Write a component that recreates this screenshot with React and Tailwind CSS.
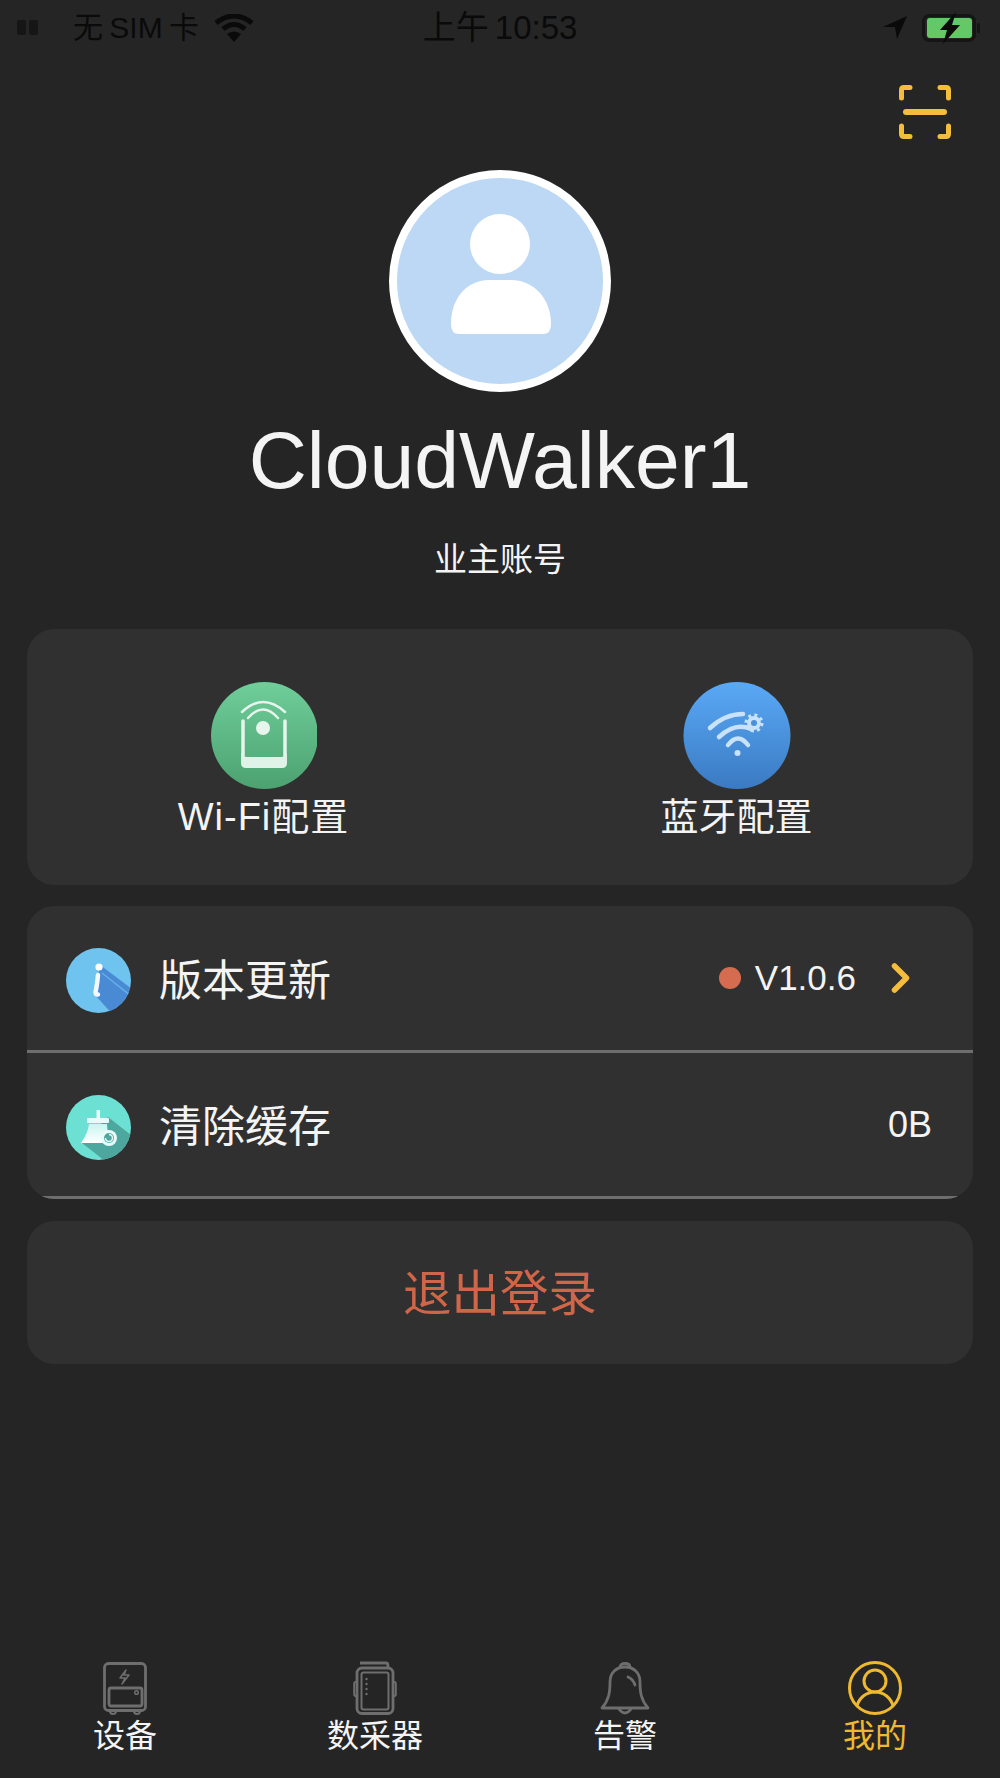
// App.jsx - profile page of the solar monitoring app
const FONT = "font-['Liberation_Sans','Noto_Sans_CJK_SC',sans-serif]";

const StatusBar = () => (
  <div className="flex h-[54px] items-center pt-[1px] text-[30px] leading-[40px] text-[#0a0a0a]">
    <div className="flex flex-1 items-center">
      <svg width="22" height="16" viewBox="0 0 22 16" className="ml-[17px]">
        <rect x="0" y="0" width="9" height="15" rx="2" fill="#161616" />
        <rect x="12" y="0" width="9" height="15" rx="2" fill="#161616" />
      </svg>
      <span className="ml-[34px] [word-spacing:-2px]">无 SIM 卡</span>
      <svg width="40" height="28" viewBox="0 0 40 28" className="ml-[15px]" fill="none" stroke="#0a0a0a" strokeWidth="5">
        <path d="M2 9 Q20 -5 38 9" />
        <path d="M9 15 Q20 6 31 15" />
        <path d="M20 28 L13 20 Q20 15 27 20 Z" fill="#0a0a0a" stroke="none" />
      </svg>
    </div>
    <span className="text-[33px] [word-spacing:-3px]">上午 10:53</span>
    <div className="flex flex-1 items-center justify-end">
      <svg width="24" height="23" viewBox="0 0 24 23">
        <path d="M24 0 L14 23 L12 11 L0 11 Z" fill="#0a0a0a" />
      </svg>
      <svg width="58" height="32" viewBox="0 0 58 32" className="ml-[15px] mr-[20px]">
        <rect x="1.5" y="3.5" width="51" height="25" rx="6" fill="none" stroke="#151515" strokeWidth="3" />
        <rect x="5" y="6" width="45" height="20" rx="3" fill="#64c866" />
        <rect x="55" y="11" width="3" height="10" rx="1.5" fill="#151515" />
        <path d="M34 0 L18 18 H25 L21 32 L38 13 H30 Z" fill="#0a0a0a" />
      </svg>
    </div>
  </div>
);

const ScanIcon = () => (
  <svg width="52" height="54" viewBox="0 0 52 54" fill="none" stroke="#f5bd3c" strokeWidth="5" strokeLinecap="round">
    <path d="M2.5 13 V5 Q2.5 2.5 5 2.5 H11" />
    <path d="M49.5 13 V5 Q49.5 2.5 47 2.5 H41" />
    <path d="M2.5 41 V49 Q2.5 51.5 5 51.5 H11" />
    <path d="M49.5 41 V49 Q49.5 51.5 47 51.5 H41" />
    <path d="M7 27 H45" strokeWidth="6" />
  </svg>
);

const Avatar = () => (
  <svg width="222" height="222" viewBox="0 0 222 222">
    <circle cx="111" cy="111" r="107" fill="#bcd8f5" stroke="#ffffff" strokeWidth="8" />
    <circle cx="111" cy="74" r="30" fill="#ffffff" />
    <path d="M62 154 C62 126 80 110 100 110 H122 C144 110 162 128 162 154 Q162 164 154 164 H70 Q62 164 62 154 Z" fill="#fff" />
  </svg>
);

const WifiConfigIcon = () => (
  <svg width="106" height="107" viewBox="0 0 106 107">
    <defs>
      <linearGradient id="greenBg" x1="0" y1="0" x2="0" y2="1">
        <stop offset="0" stopColor="#6fce9a" />
        <stop offset="1" stopColor="#4ca270" />
      </linearGradient>
    </defs>
    <circle cx="53.5" cy="53.5" r="53.5" fill="url(#greenBg)" />
    <g fill="none" stroke="#e6f6ed" strokeWidth="2.5" strokeLinecap="round">
      <path d="M31 30 Q52 10 74 30" />
      <path d="M37 36 Q52 19 67 36" />
      <path d="M32 39 V78 H74 V39" strokeWidth="3.5" />
    </g>
    <circle cx="52" cy="46" r="7" fill="#e6f6ed" />
    <path d="M30 71 Q32 75 36 75 H70 Q74 75 76 71 V81 Q76 86 71 86 H35 Q30 86 30 81 Z" fill="#e0f3e9" />
  </svg>
);

const BluetoothConfigIcon = () => (
  <svg width="108" height="107" viewBox="0 0 108 107">
    <defs>
      <linearGradient id="blueBg" x1="0" y1="0" x2="0" y2="1">
        <stop offset="0" stopColor="#5aa9f6" />
        <stop offset="1" stopColor="#3a7ac2" />
      </linearGradient>
    </defs>
    <circle cx="54" cy="53.5" r="53.5" fill="url(#blueBg)" />
    <g fill="none" stroke="#c8e2fb" strokeWidth="4.5" strokeLinecap="round">
      <path d="M27 46 Q42 32 60 32" />
      <path d="M36 55 Q52 40 68 47" />
      <path d="M45 63 Q55 50 65 63" />
    </g>
    <circle cx="54.5" cy="71" r="3" fill="#c8e2fb" />
    <circle cx="71" cy="41" r="7" fill="#c8e2fb" />
    <circle cx="71" cy="41" r="8" fill="none" stroke="#c8e2fb" strokeWidth="3" strokeDasharray="3 3.3" />
    <circle cx="71" cy="41" r="3" fill="#4a8fdb" />
  </svg>
);

const InfoIcon = () => (
  <svg width="65" height="65" viewBox="0 0 65 65">
    <defs>
      <clipPath id="infoClip"><circle cx="32.5" cy="32.5" r="32.5" /></clipPath>
    </defs>
    <g clipPath="url(#infoClip)">
      <rect width="65" height="65" fill="#6ec3ef" />
      <path d="M34 17 L70 44 V70 H50 L29 47 Z" fill="#4a89d3" />
      <path d="M36 25 L70 52" stroke="#6ec3ef" strokeWidth="1.5" opacity="0.7" />
    </g>
    <circle cx="33" cy="19" r="3.6" fill="#fff" />
    <path d="M32 27 Q31 38 29.5 44 Q29.5 47 32 46.5" fill="none" stroke="#f3f8fd" strokeWidth="4.5" strokeLinecap="round" />
  </svg>
);

const BroomIcon = () => (
  <svg width="65" height="65" viewBox="0 0 65 65">
    <defs>
      <clipPath id="broomClip"><circle cx="32.5" cy="32.5" r="32.5" /></clipPath>
      <linearGradient id="broomFill" x1="0" y1="0" x2="0" y2="1">
        <stop offset="0" stopColor="#c8f5ef" />
        <stop offset="1" stopColor="#ffffff" />
      </linearGradient>
    </defs>
    <g clipPath="url(#broomClip)">
      <rect width="65" height="65" fill="#6de0d4" />
      <path d="M42 22 L70 44 V70 H44 L16 48 Z" fill="#4ea79f" />
    </g>
    <rect x="30.5" y="15" width="3.5" height="9" fill="#f2fcfa" />
    <rect x="21" y="23" width="22" height="5" rx="1" fill="#e8fbf8" />
    <path d="M23 29 H41 Q41 38 44 48 H15 Q22 38 23 29 Z" fill="url(#broomFill)" />
    <circle cx="43" cy="43" r="8" fill="#e8fbf8" />
    <circle cx="43" cy="43" r="5" fill="#4ea79f" />
    <path d="M39.5 43 A3.5 3.5 0 1 0 43 39.5" fill="none" stroke="#e8fbf8" strokeWidth="1.5" />
  </svg>
);

const DeviceIcon = () => (
  <svg width="44" height="53" viewBox="0 0 44 53" fill="none" stroke="#6e6e6e" strokeWidth="2.8">
    <rect x="1.5" y="1.5" width="41" height="47" rx="4" />
    <rect x="6" y="26" width="33" height="18" rx="2" />
    <circle cx="33.5" cy="30.5" r="1.8" strokeWidth="1.5" />
    <path d="M23 8 L17 16 H22 L19 22 L26 13 H21 Z" strokeWidth="1.5" strokeLinejoin="round" />
    <path d="M7 49 Q7 52 10 52 Q13 52 13 49 M31 49 Q31 52 34 52 Q37 52 37 49" strokeWidth="2" />
  </svg>
);

const LoggerIcon = () => (
  <svg width="44" height="54" viewBox="0 0 44 54" fill="none" stroke="#6e6e6e" strokeWidth="2.8">
    <path d="M7 2 H33 Q35 2 35 5 V7" />
    <rect x="4" y="7" width="36" height="45.5" rx="5" />
    <rect x="8.5" y="11.5" width="27" height="37" rx="2" strokeWidth="2" />
    <path d="M4 21 H2.5 Q1.2 21 1.2 23 V33 Q1.2 35 2.5 35 H4 M40 21 H41.5 Q42.8 21 42.8 23 V33 Q42.8 35 41.5 35 H40" strokeWidth="2" />
    <g fill="#6e6e6e" stroke="none">
      <circle cx="13.5" cy="18" r="1.2" />
      <circle cx="13.5" cy="23" r="1.2" />
      <circle cx="13.5" cy="28" r="1.2" />
      <circle cx="13.5" cy="33" r="1.2" />
    </g>
  </svg>
);

const BellIcon = () => (
  <svg width="50" height="53" viewBox="0 0 50 53" fill="none" stroke="#6e6e6e" strokeWidth="2.8" strokeLinejoin="round" strokeLinecap="round">
    <path d="M2 46 C9 38 10 30 10 20 C10 10 17 5 25 5 C33 5 40 10 40 20 C40 30 41 38 48 46 Z" />
    <path d="M20 5.5 Q20 1.5 25 1.5 Q30 1.5 30 5.5" />
    <path d="M19 47 Q25 55 31 47" />
    <path d="M28 15 Q33 17 35 23" />
  </svg>
);

const MineIcon = () => (
  <svg width="54" height="54" viewBox="0 0 54 54" fill="none" stroke="#eeb92f" strokeWidth="3">
    <circle cx="27" cy="27" r="25.5" />
    <circle cx="27" cy="20" r="11" />
    <path d="M9 45 C11 37 18 31 27 31 C36 31 43 37 45 45" />
  </svg>
);

const tabs = [
  { label: '设备', icon: <DeviceIcon /> },
  { label: '数采器', icon: <LoggerIcon /> },
  { label: '告警', icon: <BellIcon /> },
  { label: '我的', icon: <MineIcon />, active: true },
];

export default function App() {
  return (
    <div className={`${FONT} flex h-[1778px] w-[1000px] flex-col bg-[#252525] text-[#f4f4f4]`}>
      <StatusBar />

      <div className="flex justify-end pr-[49px] pt-[31px]">
        <ScanIcon />
      </div>

      <div className="flex flex-col items-center">
        <div className="mt-[31px]">
          <Avatar />
        </div>
        <div className="mt-[22px] text-[80.5px] leading-[92px]">CloudWalker1</div>
        <div className="mt-[32px] text-[33px] leading-[44px]">业主账号</div>
      </div>

      <div className="mx-[27px] mt-[47px] flex h-[256px] rounded-[27px] bg-[#303030] pt-[53px]">
        <div className="flex w-[473px] flex-col items-center">
          <WifiConfigIcon />
          <span className="mt-[3px] text-[38px] leading-[50px] tracking-[1px]">Wi-Fi配置</span>
        </div>
        <div className="flex w-[473px] flex-col items-center">
          <BluetoothConfigIcon />
          <span className="mt-[3px] text-[38px] leading-[50px]">蓝牙配置</span>
        </div>
      </div>

      <div className="mx-[27px] mt-[21px] overflow-hidden rounded-[27px] bg-[#303030]">
        <div className="flex h-[147px] items-center border-b-[3px] border-[#6e6e6e] pl-[39px] pr-[62px]">
          <div className="mt-[5px] flex items-center">
            <InfoIcon />
            <span className="ml-[28px] text-[43px] leading-[56px]">版本更新</span>
          </div>
          <span className="ml-auto h-[22px] w-[22px] rounded-full bg-[#d56c50]" />
          <span className="ml-[14px] text-[35px] leading-[44px]">V1.0.6</span>
          <svg width="20" height="30" viewBox="0 0 20 30" className="ml-[35px]" fill="none" stroke="#f5bd3c" strokeWidth="5.5" strokeLinecap="round" strokeLinejoin="round">
            <path d="M3.5 3 L15.5 15 L3.5 27" />
          </svg>
        </div>
        <div className="flex h-[146px] items-center border-b-[3px] border-[#6e6e6e] pl-[39px] pr-[41px]">
          <div className="mt-[5px] flex items-center">
            <BroomIcon />
            <span className="ml-[28px] text-[43px] leading-[56px]">清除缓存</span>
          </div>
          <span className="ml-auto text-[36px] leading-[44px]">0B</span>
        </div>
      </div>

      <div className="mx-[27px] mt-[22px] flex h-[143px] items-center justify-center rounded-[27px] bg-[#303030] pt-[4px] text-[48.5px] text-[#cf6549]">
        退出登录
      </div>

      <div className="mt-auto grid grid-cols-4 pb-[23px]">
        {tabs.map((tab) => (
          <div key={tab.label} className="flex flex-col items-center">
            <div className="flex h-[54px] items-center">{tab.icon}</div>
            <span className={`mt-[2px] text-[32px] leading-[38px] ${tab.active ? 'text-[#eeb92f]' : 'text-[#f4f4f4]'}`}>
              {tab.label}
            </span>
          </div>
        ))}
      </div>
    </div>
  );
}
